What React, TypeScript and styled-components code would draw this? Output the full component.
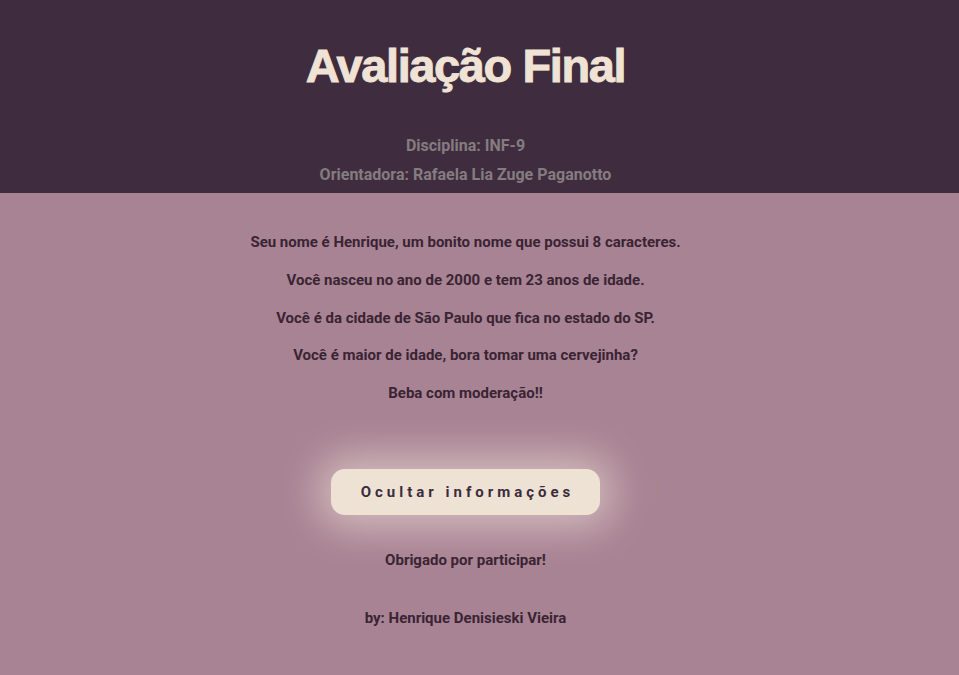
import React from "react";
import styled, { createGlobalStyle } from "styled-components";

const Global = createGlobalStyle`
  html, body { margin: 0; padding: 0; }
  body {
    background: #a88393;
    font-family: Roboto, "Liberation Sans", sans-serif;
    min-height: 675px;
  }
`;

const Page = styled.div`
  min-height: 675px;
  background: #a88393;
  display: flex;
  flex-direction: column;
`;

const Header = styled.header`
  background: #3f2d3f;
  display: flex;
  flex-direction: column;
  align-items: center;
  padding: 38px 28px 4px 0;
`;

const Title = styled.h1`
  margin: 0;
  font-family: "Liberation Sans", Arial, sans-serif;
  font-weight: 700;
  font-size: 47px;
  letter-spacing: -1.4px;
  line-height: 56px;
  color: #f0e3d5;
  -webkit-text-stroke: 0.9px #f0e3d5;
`;

const SubList = styled.div`
  margin-top: 37px;
  display: flex;
  flex-direction: column;
  align-items: center;
`;

const Sub = styled.p`
  margin: 0;
  font-weight: 700;
  font-size: 16px;
  line-height: 29px;
  color: #857c7f;
`;

const Main = styled.main`
  display: flex;
  flex-direction: column;
  align-items: center;
  padding: 39px 28px 0 0;
`;

const InfoList = styled.div`
  display: flex;
  flex-direction: column;
  align-items: center;
  gap: 17.75px;
`;

const Line = styled.p<{ $gapTop?: number }>`
  margin: 0;
  margin-top: ${(p) => p.$gapTop ?? 0}px;
  font-weight: 700;
  font-size: 15px;
  line-height: 20px;
  color: #3a2433;
  text-align: center;
`;

const Button = styled.button`
  margin-top: 66px;
  width: 269px;
  height: 46px;
  border: none;
  border-radius: 14px;
  background: #eee2d4;
  color: #3b2c3c;
  font-family: Roboto, "Liberation Sans", sans-serif;
  font-weight: 700;
  font-size: 15px;
  letter-spacing: 4px;
  padding: 0 0 0 4px;
  box-shadow: 0 0 40px 12px rgba(250, 236, 226, 0.55);
  cursor: pointer;
`;

export default function App() {
  return (
    <Page>
      <Global />
      <Header>
        <Title>Avaliação Final</Title>
        <SubList>
          <Sub>Disciplina: INF-9</Sub>
          <Sub>Orientadora: Rafaela Lia Zuge Paganotto</Sub>
        </SubList>
      </Header>
      <Main>
        <InfoList>
          <Line>Seu nome é Henrique, um bonito nome que possui 8 caracteres.</Line>
          <Line>Você nasceu no ano de 2000 e tem 23 anos de idade.</Line>
          <Line>Você é da cidade de São Paulo que fica no estado do SP.</Line>
          <Line>Você é maior de idade, bora tomar uma cervejinha?</Line>
          <Line>Beba com moderação!!</Line>
        </InfoList>
        <Button>Ocultar informações</Button>
        <Line $gapTop={35}>Obrigado por participar!</Line>
        <Line $gapTop={38}>by: Henrique Denisieski Vieira</Line>
      </Main>
    </Page>
  );
}
